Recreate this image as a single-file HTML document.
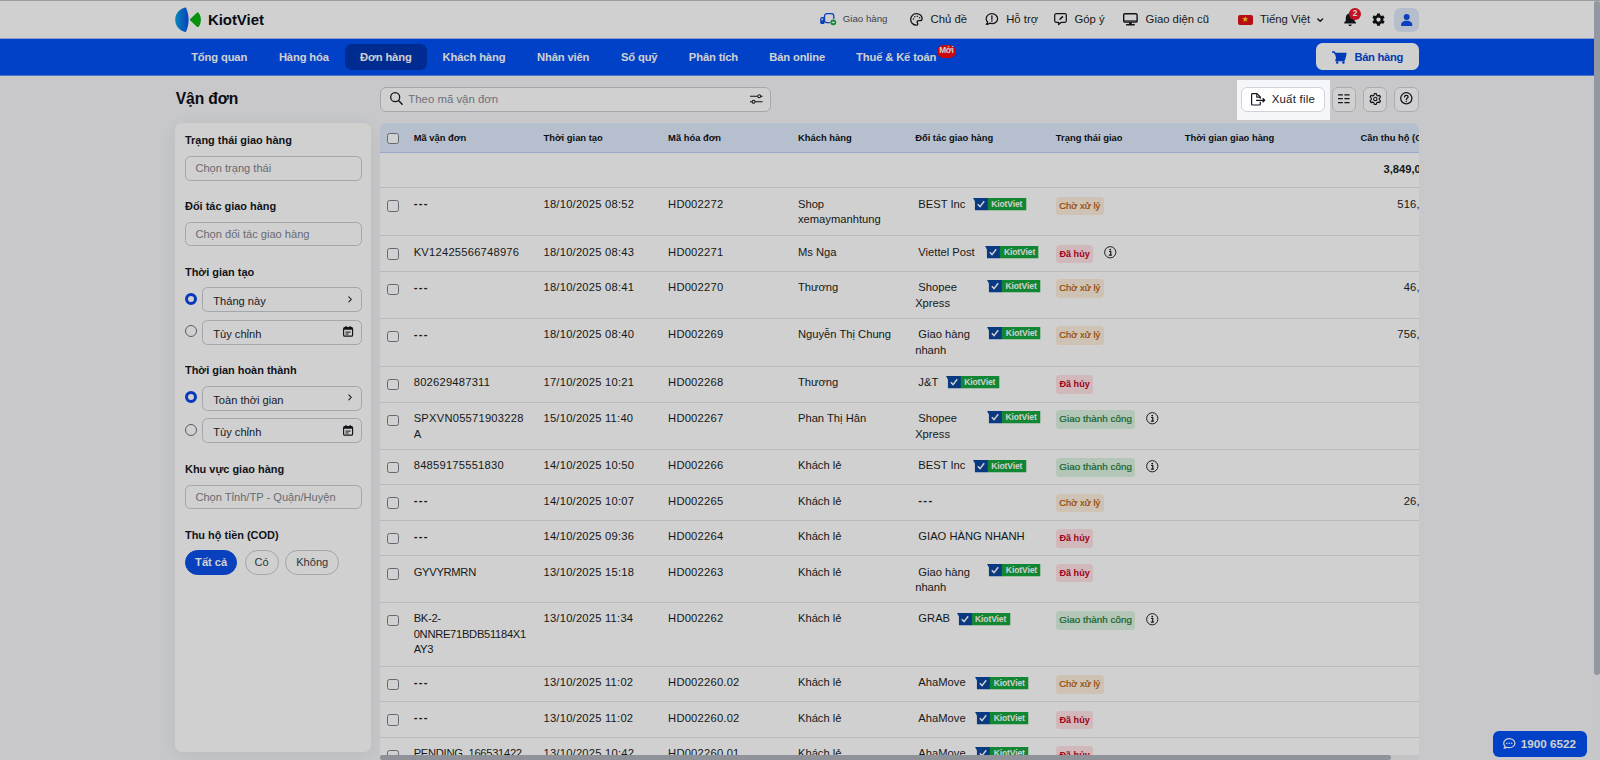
<!DOCTYPE html>
<html lang="vi">
<head>
<meta charset="utf-8">
<title>Vận đơn - KiotViet</title>
<style>
*{box-sizing:border-box;margin:0;padding:0}
html,body{width:1600px;height:760px;overflow:hidden}
body{position:relative;background:#f5f6f9;font-family:"Liberation Sans",sans-serif;font-size:11.5px;color:#15181e;line-height:15.5px}
svg{display:block;overflow:visible}
.abs{position:absolute}
/* ---------- header ---------- */
.topbar{position:absolute;left:0;top:0;width:1600px;height:38.4px;background:#fff}
.logo{position:absolute;left:174.5px;top:7.2px;height:25.6px;display:flex;align-items:center}
.logo b{font-size:15px;margin-left:7.4px;color:#0b0f1c;position:relative;top:-.2px;letter-spacing:-.05px}
.tool{position:absolute;top:11.6px;white-space:nowrap;font-size:11.3px;color:#1b1e24}
.tool.sm{font-size:9.7px;top:11.4px;color:#4a5160}
.ico{position:absolute}
.flag{position:absolute;left:1237.7px;top:14.5px;width:15.4px;height:10.2px;border-radius:2px;background:#df1217;overflow:hidden}
.bellbadge{position:absolute;left:1349.2px;top:7.8px;width:11.8px;height:11.8px;border-radius:50%;background:#f0142a;color:#fff;font-size:8.4px;font-weight:700;text-align:center;line-height:11.8px}
.avatar{position:absolute;left:1394px;top:7.5px;width:24.7px;height:24.6px;border-radius:6.5px;background:#dfe9fb}
/* ---------- nav ---------- */
.nav{position:absolute;left:0;top:38px;width:1600px;height:38px;background:#0050f4;border-top:1px solid #b4bcf8;border-bottom:1px solid #5f8df7}
.nav ul{list-style:none;position:absolute;left:175.3px;top:4.6px;display:flex}
.nav li{height:26.8px;line-height:26.4px;padding:0;text-align:center;color:#fff;font-weight:700;font-size:11.2px;letter-spacing:-.13px;white-space:nowrap;border-radius:6.5px;position:relative}
.nav li.on{background:#0036b4}
.badge-new{position:absolute;width:19px;height:13px;border-radius:7px;background:#f80a10;color:#fff;font-size:8.3px;font-weight:700;text-align:center;line-height:11.2px;letter-spacing:-.3px}
.sell{position:absolute;left:1316.4px;top:4.2px;width:102.8px;height:27.3px;background:#fff;border-radius:6.5px;color:#0048e0;font-weight:700;font-size:11.2px;letter-spacing:-.3px}
.sell span{position:absolute;left:38px;top:6.6px}
/* ---------- page head ---------- */
h1{position:absolute;left:175.8px;top:88.6px;font-size:15.6px;line-height:19px;font-weight:700;color:#0b0e14;letter-spacing:-.1px}
.search{position:absolute;left:380.3px;top:86.6px;width:390.4px;height:25px;border:1px solid #c9ccd3;border-radius:6px;background:#fff}
.search span{position:absolute;left:27px;top:4.8px;color:#868b95;font-size:11.4px}
.btn{position:absolute;top:86.6px;height:25px;border:1px solid #cfd3da;border-radius:6px;background:#fff}
.btn.sq{width:24.4px}
.btn.exp{left:1241.3px;width:83.4px}
.btn.exp span{position:absolute;left:29.4px;top:4.6px;font-size:11.4px;color:#15181e;letter-spacing:.25px}
/* ---------- sidebar ---------- */
.side{position:absolute;left:175px;top:123px;width:196.3px;height:629.4px;background:#fff;border-radius:7px;box-shadow:0 4px 24px rgba(0,0,0,.08)}
.side h3{position:absolute;left:10px;font-size:10.95px;line-height:14px;font-weight:700;color:#15181e;white-space:nowrap}
.inp{position:absolute;left:10px;width:176.8px;height:24.4px;border:1px solid #c9ccd3;border-radius:5.5px;background:#fff;font-size:11.1px;line-height:22.4px;padding-left:9.4px;color:#7f848e;white-space:nowrap}
.inp.opt{left:26.9px;width:159.9px;height:25px;color:#23262c;padding-left:10.4px;line-height:27px}
.radio{position:absolute;left:10px;width:12px;height:12px;border-radius:50%;border:1px solid #6d727c;background:#fff}
.radio.on{border:3.4px solid #0b45e6}
.pill{position:absolute;top:427px;height:25px;border:1px solid #c9ccd3;border-radius:13px;font-size:11.1px;line-height:23px;text-align:center;color:#3a3f49;background:#fff}
.pill.on{background:#0b4fe8;border-color:#0b4fe8;color:#fff;font-weight:700}
/* ---------- table ---------- */
.tw{position:absolute;left:380.3px;top:123px;width:1038.8px;height:637px;overflow:hidden;border-radius:6px 6px 0 0;background:#fff}
table{border-collapse:collapse;table-layout:fixed;width:1083.4px}
th{background:#deebfd;height:29.6px;padding-top:1.5px!important;font-size:9.4px;font-weight:700;text-align:left;color:#0f1218;border-bottom:1px solid #b9cff8;padding:0;white-space:nowrap;vertical-align:middle;line-height:12px}
td{vertical-align:top;padding:8.5px 0 0 0;border-bottom:1px solid #e2e4e8;font-size:11.2px;line-height:15.5px;color:#1b1e24;overflow:hidden}
td.n{letter-spacing:.22px}
td.u{letter-spacing:-.3px}
td.w{padding-right:6px;word-break:break-all}
tr.sum td{height:35px;font-weight:700}
tr.sum td.r{padding-right:30.4px}
th.r{padding-right:23.6px}
th.r,td.r{text-align:right;padding-right:24.5px}
.cb{display:block;width:11.6px;height:11.6px;border:1.1px solid #7b808a;border-radius:2.6px;background:#fff;margin:3.4px 0 0 7.2px}
th .cb{margin-top:0}
td.p{position:relative}
.kv{position:absolute;top:9.6px;height:12.2px;white-space:nowrap}
td.p2 .kv{top:7.9px}
td.s2{padding-top:7.1px}
td.s1{padding-top:8.1px}
.kv svg{position:absolute;left:0;top:0}
.kv i{position:absolute;left:18.5px;top:0;font-style:normal;font-weight:700;font-size:8.5px;line-height:12px;color:#fff;letter-spacing:-.1px}
.kv{width:53.3px}
.st{display:inline-block;height:18.4px;line-height:18.4px;border-radius:3.5px;padding:0 3.4px;font-size:9.4px;position:relative;top:.4px;white-space:nowrap}
.st.wait{background:#fdeedd;color:#b9590a;-webkit-text-stroke:.22px #b9590a}
.st.cancel{background:#ffe2e6;color:#c4001f;font-weight:700;font-size:9.1px;padding:0 3.6px}
.st.ok{background:#dcf3e2;color:#187a31;-webkit-text-stroke:.2px #187a31;font-size:9.8px;letter-spacing:.05px}
.info{display:inline-block;vertical-align:top;margin-left:10.6px;position:relative;top:1.9px}
.pt{padding-left:3.2px}
.d{font-weight:700;letter-spacing:1.3px;position:relative;top:-.4px}
.hscroll{position:absolute;left:380.3px;top:755.4px;width:1038.8px;height:4.6px;background:#eeeff2}
.hscroll i{position:absolute;left:0;top:0;width:1011px;height:4.6px;border-radius:2.3px;background:#b0b4bc}
/* ---------- overlay ---------- */
.spot{position:absolute;left:1236.6px;top:80px;width:93.4px;height:40px;box-shadow:0 0 0 3000px rgba(0,0,0,.184);pointer-events:none;z-index:50}
.vscroll{position:absolute;left:1593.8px;top:0;width:6.2px;height:760px;background:#c6c7ca;z-index:60}
.vscroll i{position:absolute;left:0;top:1px;width:6.2px;height:673.5px;border-radius:3px;background:#9297a1}
.topline{position:absolute;left:0;top:0;width:1600px;height:1px;background:#9d9d9d;z-index:61}
.call{position:absolute;left:1493.4px;top:730.8px;width:93.8px;height:25.8px;border-radius:6px;background:#0050f4;color:#fff;font-weight:700;font-size:11.7px;z-index:40}
.call span{position:absolute;left:27.4px;top:5.2px;white-space:nowrap}
</style>
</head>
<body>
<header class="topbar">
<div class="logo"><svg width="26" height="25.6" viewBox="0 0 26 25.6"><defs><linearGradient id="lg" x1="0" y1="0" x2="1" y2="0"><stop offset="0" stop-color="#0aa6e6"/><stop offset="1" stop-color="#0b50e4"/></linearGradient></defs><path d="M10.200 .5C4 1.900 .2 7 .2 12.700S4 23.500 10.200 24.900C10.600 25 10.900 24.900 11.100 24.500 12.700 20.900 13.600 16.900 13.600 12.700S12.700 4.500 11.100 .9C10.900 .5 10.600 .4 10.200 .5z" fill="url(#lg)"/><path d="M15.200 12L21.600 5.900C22.300 5.200 23.200 5.200 23.700 5.900 25.200 7.600 25.900 10 25.900 12.700S25.200 17.800 23.700 19.500C23.200 20.200 22.300 20.200 21.600 19.500L15.200 13.400C14.800 13 14.800 12.400 15.200 12z" fill="#0cb412"/></svg><b>KiotViet</b></div>
<svg class="ico" style="left:819.8px;top:12.6px" width="16.4" height="12.2" viewBox="0 0 16.4 12.2" ><rect x="4.500" y=".7" width="9.300" height="8.900" rx="2.300" fill="none" stroke="#0b4fe8" stroke-width="1.300"/><path d="M.2 6.200C.2 4.900 1 4.100 2.200 4.100H4.300V11H1.400C.7 11 .2 10.500 .2 9.800z" fill="#0b4fe8"/><path d="M1.400 6.300C1.400 5.700 1.800 5.300 2.400 5.300H3.100V7.300H1.400z" fill="#cfe0ff"/><circle cx="13.300" cy="9.300" r="3.500" fill="#fff"/><circle cx="13.300" cy="9.300" r="2.900" fill="#11a63a"/><rect x="11.700" y="8.400" width="3.200" height="1.800" rx=".8" fill="#d8f5df"/></svg>
<span class="tool sm" style="left:842.8px">Giao hàng</span>
<svg class="ico" style="left:909.7px;top:13px" width="12.8" height="12.8" viewBox="0 0 12.8 12.8" ><path d="M6.400 .7C3.200 .7 .7 3.200 .7 6.400s2.500 5.700 5.700 5.700c.9 0 1.400-.5 1.400-1.200 0-.4-.2-.7-.4-1-.2-.3-.3-.5-.3-.9 0-.8.600-1.300 1.300-1.300h1.500c1.300 0 2.200-.9 2.200-2.200C12.100 2.700 9.600 .7 6.400 .7z" fill="none" stroke="#15181e" stroke-width="1.300"/><circle cx="3.500" cy="6" r=".75" fill="#15181e"/><circle cx="4.800" cy="3.700" r=".75" fill="#15181e"/><circle cx="7.400" cy="3.200" r=".75" fill="#15181e"/><circle cx="9.600" cy="4.800" r=".75" fill="#15181e"/></svg>
<span class="tool" style="left:930.6px">Chủ đề</span>
<svg class="ico" style="left:985.4px;top:13.2px" width="13.8" height="12" viewBox="0 0 13.8 12" ><path d="M6.900 .7C3.700 .7 1.200 2.900 1.200 5.700c0 1.300 .5 2.400 1.400 3.300-.1 .9-.6 1.700-1.300 2.300 1.300 0 2.500-.4 3.400-1.100 .7 .2 1.400 .4 2.200 .4 3.200 0 5.700-2.200 5.700-4.900S10.100 .7 6.900 .7z" fill="none" stroke="#15181e" stroke-width="1.250" stroke-linejoin="round"/><path d="M6.900 3V6.300" stroke="#15181e" stroke-width="1.300" stroke-linecap="round"/><circle cx="6.900" cy="8.100" r=".8" fill="#15181e"/></svg>
<span class="tool" style="left:1006.2px">Hỗ trợ</span>
<svg class="ico" style="left:1054px;top:13.2px" width="13" height="12.2" viewBox="0 0 13 12.2" ><path d="M2.200 .7H10.800C11.700 .7 12.300 1.300 12.300 2.200V7.800C12.300 8.700 11.700 9.300 10.800 9.300H7.300L4.600 11.600V9.300H2.200C1.300 9.300 .7 8.700 .7 7.800V2.200C.7 1.300 1.300 .7 2.200 .7z" fill="none" stroke="#15181e" stroke-width="1.250" stroke-linejoin="round"/><path d="M5.200 7L5.600 5.400 8.300 2.700 9.500 3.900 6.800 6.600z" fill="#15181e"/></svg>
<span class="tool" style="left:1074.4px">Góp ý</span>
<svg class="ico" style="left:1123.4px;top:13.1px" width="14.8" height="12.6" viewBox="0 0 14.8 12.6" ><rect x=".7" y=".7" width="13.400" height="8.400" rx="1.200" fill="none" stroke="#15181e" stroke-width="1.400"/><path d="M.7 7.400H14.100V8.500H.7z" fill="#15181e"/><path d="M6 9.300H8.800V11.200H6z" fill="#15181e"/><path d="M3.600 11.800H11.200" stroke="#15181e" stroke-width="1.500" stroke-linecap="round"/></svg>
<span class="tool" style="left:1145.6px">Giao diện cũ</span>
<span class="flag"><svg class="abs" style="left:4.500px;top:1.900px" width="6.400" height="6.400" viewBox="0 0 10 10"><path d="M5 .3L6.200 3.700H9.800L6.900 5.800 8 9.300 5 7.200 2 9.300 3.100 5.800 .200 3.700H3.800z" fill="#ffe226"/></svg></span>
<span class="tool" style="left:1260px">Tiếng Việt</span>
<svg class="ico" style="left:1317.2px;top:17.6px" width="6.4" height="4.2" viewBox="0 0 6.4 4.2" ><path d="M.8 .9L3.200 3.300 5.600 .9" fill="none" stroke="#15181e" stroke-width="1.400" stroke-linecap="round" stroke-linejoin="round"/></svg>
<svg class="ico" style="left:1344px;top:12.3px" width="12.2" height="14.2" viewBox="0 0 12.2 14.2" ><path d="M6.100 0C5.500 0 5.100 .4 5.100 1V1.500C3.100 2 1.800 3.700 1.800 5.900V8.600L.300 10.500C0 10.900 .300 11.500 .800 11.500H11.400C11.900 11.500 12.200 10.900 11.900 10.500L10.400 8.600V5.900C10.400 3.700 9.100 2 7.100 1.500V1C7.100 .4 6.700 0 6.100 0z" fill="#15181e"/><path d="M4.500 12.500H7.700C7.700 13.400 7 14.100 6.100 14.100S4.500 13.400 4.500 12.500z" fill="#15181e"/></svg>
<span class="bellbadge">2</span>
<svg class="ico" style="left:1371.8px;top:12.9px" width="13" height="13" viewBox="0 0 13 13" ><path d="M11.300 6.600c0-.3 0-.5-.1-.8l1.200-.9c.1-.1.100-.2.100-.4L11.300 2.500c-.1-.1-.2-.2-.4-.1L9.500 2.900c-.4-.3-.8-.5-1.300-.7L8 .700C8 .600 7.800 .500 7.700 .500H5.300c-.1 0-.3.100-.3.200L4.800 2.200c-.5.200-.9.400-1.300.7L2.100 2.400c-.2-.1-.3 0-.4.100L.5 4.500c-.1.200 0 .3.100.4l1.200.9c-.1.300-.1.500-.1.800s0 .5.100.8L.6 8.300c-.1.100-.1.200-.1.400l1.200 2c.1.100.2.200.4.100l1.400-.5c.4.300.8.500 1.300.7l.2 1.500c0 .1.200.2.300.2h2.400c.1 0 .3-.1.300-.2l.2-1.500c.5-.2.900-.4 1.300-.7l1.400.5c.2.100.3 0 .4-.1l1.200-2c.1-.2 0-.3-.1-.4l-1.200-.9c.1-.3.1-.5.1-.8zM6.500 8.700c-1.200 0-2.100-.9-2.100-2.100s.9-2.100 2.100-2.100 2.100.9 2.100 2.100-.9 2.100-2.100 2.100z" fill="#111318"/></svg>
<span class="avatar"><svg class="abs" style="left:6.900px;top:6.100px" width="11.400" height="12.100" viewBox="0 0 11.400 12.100"><circle cx="5.700" cy="3" r="3" fill="#0b4fe8"/><path d="M0 11.300C0 8.500 2.300 6.800 5.700 6.800s5.700 1.700 5.700 4.500c0 .5-.3.800-.8.800H.8C.3 12.100 0 11.800 0 11.300z" fill="#0b4fe8"/></svg></span>
</header>
<nav class="nav"><ul>
<li style="width:87.7px">Tổng quan</li>
<li style="width:81.8px">Hàng hóa</li>
<li class="on" style="width:82px">Đơn hàng</li>
<li style="width:94.4px">Khách hàng</li>
<li style="width:84px">Nhân viên</li>
<li style="width:68.1px">Sổ quỹ</li>
<li style="width:80.4px">Phân tích</li>
<li style="width:87px">Bán online</li>
<li style="width:111px">Thuế &amp; Kế toán</li>
</ul><span class="badge-new" style="left:936.8px;top:5.8px">Mới</span>
<div class="sell"><svg class="ico" style="left:16px;top:7.4px" width="14.4" height="12.8" viewBox="0 0 14.4 12.8" ><path d="M0 .9H2.300L2.900 2.600H13.900L12.500 8.200H4.300L4 9.500H12.700" fill="none" stroke="#0048e0" stroke-width="1.500" stroke-linejoin="round"/><path d="M2.900 2.600H13.900L12.500 8.200H4.300z" fill="#0048e0"/><circle cx="5.200" cy="11.500" r="1.300" fill="#0048e0"/><circle cx="11.400" cy="11.500" r="1.300" fill="#0048e0"/></svg><span>Bán hàng</span></div>
</nav>
<main>
<h1>Vận đơn</h1>
<div class="search"><svg class="ico" style="left:9.2px;top:4.5px" width="12.8" height="12.8" viewBox="0 0 12.8 12.8" ><circle cx="5.200" cy="5.200" r="4.500" fill="none" stroke="#15181e" stroke-width="1.300"/><path d="M8.500 8.500L12.200 12.200" stroke="#15181e" stroke-width="1.400" stroke-linecap="round"/></svg><span>Theo mã vận đơn</span><svg class="ico" style="left:369px;top:6.3px" width="12.6" height="10.2" viewBox="0 0 12.6 10.2" ><path d="M0 2.300H12.600M0 7.800H12.600" stroke="#15181e" stroke-width="1.050"/><circle cx="9.200" cy="2.300" r="1.450" fill="#fff" stroke="#15181e" stroke-width="1.050"/><circle cx="3.600" cy="7.800" r="1.450" fill="#fff" stroke="#15181e" stroke-width="1.050"/></svg></div>
<div class="btn exp"><svg class="ico" style="left:9.2px;top:5.3px" width="14" height="12.6" viewBox="0 0 14 12.6" ><path d="M9.300 8.800V11.200C9.300 11.700 8.900 12 8.500 12H1.500C1 12 .6 11.700 .6 11.200V1.400C.6 .9 1 .6 1.500 .6H6L9.300 3.900V5.800" fill="none" stroke="#15181e" stroke-width="1.200" stroke-linejoin="round"/><path d="M5.800 .8V4.100H9.100" fill="none" stroke="#15181e" stroke-width="1.100"/><path d="M5 7.300H13.600M11.600 5.300L13.700 7.300 11.600 9.300" fill="none" stroke="#15181e" stroke-width="1.200" stroke-linejoin="round"/></svg><span>Xuất file</span></div>
<div class="btn sq" style="left:1332px"><svg class="ico" style="left:5.4px;top:6.6px" width="11.6" height="9.4" viewBox="0 0 11.6 9.4" ><path d="M0 .8H4.800M6.400 .8H11.600M0 4.700H4.800M6.400 4.700H11.600M0 8.600H4.800M6.400 8.600H11.600" stroke="#15181e" stroke-width="1.250"/></svg></div>
<div class="btn sq" style="left:1362.7px"><svg class="ico" style="left:4.9px;top:5.2px" width="12.6" height="12" viewBox="0 0 12.6 12" ><path d="M5.300 .6H7.300L7.700 2.200 8.900 2.900 10.500 2.400 11.500 4.100 10.300 5.300V6.700L11.500 7.900 10.500 9.600 8.900 9.100 7.700 9.800 7.300 11.400H5.300L4.900 9.800 3.700 9.100 2.100 9.600 1.100 7.900 2.300 6.700V5.300L1.100 4.100 2.100 2.400 3.700 2.900 4.900 2.200z" fill="none" stroke="#15181e" stroke-width="1.150" stroke-linejoin="round"/><circle cx="6.300" cy="6" r="1.700" fill="none" stroke="#15181e" stroke-width="1.100"/></svg></div>
<div class="btn sq" style="left:1394.2px"><svg class="ico" style="left:4.9px;top:4.9px" width="12.6" height="12.6" viewBox="0 0 12.6 12.6" ><circle cx="6.300" cy="6.300" r="5.600" fill="none" stroke="#15181e" stroke-width="1.250"/><path d="M4.500 5C4.500 3.900 5.300 3.300 6.300 3.300S8.100 3.900 8.100 4.900C8.100 6.100 6.300 6.200 6.300 7.500" fill="none" stroke="#15181e" stroke-width="1.250" stroke-linecap="round"/><circle cx="6.300" cy="9.200" r=".8" fill="#15181e"/></svg></div>
<aside class="side">
<h3 style="top:10.4px">Trạng thái giao hàng</h3>
<div class="inp" style="top:33.3px">Chọn trạng thái</div>
<h3 style="top:76.2px">Đối tác giao hàng</h3>
<div class="inp" style="top:99.1px">Chọn đối tác giao hàng</div>
<h3 style="top:142px">Thời gian tạo</h3>
<span class="radio on" style="top:170.100px"></span>
<div class="inp opt" style="top:164.300px">Tháng này<svg class="ico" style="left:145.2px;top:7.8px" width="4.1" height="6.6" viewBox="0 0 4.1 6.6" ><path d="M.8 .8L3.300 3.300 .8 5.800" fill="none" stroke="#23262c" stroke-width="1.100" stroke-linecap="round" stroke-linejoin="round"/></svg></div>
<span class="radio" style="top:202.200px"></span>
<div class="inp opt" style="top:196.900px">Tùy chỉnh<svg class="ico" style="left:139.8px;top:5.4px" width="10.2" height="10.8" viewBox="0 0 10.2 10.8" ><rect x=".6" y="1.600" width="9" height="8.600" rx="1.300" fill="none" stroke="#15181e" stroke-width="1.150"/><path d="M.6 2.900C.6 2.100 1.100 1.600 1.900 1.600H8.300C9.100 1.600 9.600 2.100 9.600 2.900V3.700H.6z" fill="#15181e"/><path d="M3 0V2M7.200 0V2" stroke="#15181e" stroke-width="1.200"/><path d="M2.500 6.100H7.700M2.500 8H5.600" stroke="#15181e" stroke-width="1"/></svg></div>
<h3 style="top:240.400px">Thời gian hoàn thành</h3>
<span class="radio on" style="top:268px"></span>
<div class="inp opt" style="top:262.600px">Toàn thời gian<svg class="ico" style="left:145.2px;top:7.8px" width="4.1" height="6.6" viewBox="0 0 4.1 6.6" ><path d="M.8 .8L3.300 3.300 .8 5.800" fill="none" stroke="#23262c" stroke-width="1.100" stroke-linecap="round" stroke-linejoin="round"/></svg></div>
<span class="radio" style="top:300.500px"></span>
<div class="inp opt" style="top:295.200px">Tùy chỉnh<svg class="ico" style="left:139.8px;top:5.4px" width="10.2" height="10.8" viewBox="0 0 10.2 10.8" ><rect x=".6" y="1.600" width="9" height="8.600" rx="1.300" fill="none" stroke="#15181e" stroke-width="1.150"/><path d="M.6 2.900C.6 2.100 1.100 1.600 1.900 1.600H8.300C9.100 1.600 9.600 2.100 9.600 2.900V3.700H.6z" fill="#15181e"/><path d="M3 0V2M7.200 0V2" stroke="#15181e" stroke-width="1.200"/><path d="M2.500 6.100H7.700M2.500 8H5.600" stroke="#15181e" stroke-width="1"/></svg></div>
<h3 style="top:338.800px">Khu vực giao hàng</h3>
<div class="inp" style="top:361.800px">Chọn Tỉnh/TP - Quận/Huyện</div>
<h3 style="top:404.500px">Thu hộ tiền (COD)</h3>
<span class="pill on" style="left:9.900px;width:52.500px">Tất cả</span>
<span class="pill" style="left:69.500px;width:34.300px">Có</span>
<span class="pill" style="left:110.400px;width:53.600px">Không</span>
</aside>
<div class="tw"><table><colgroup><col style="width:33.4px"><col style="width:129.8px"><col style="width:124.6px"><col style="width:129.9px"><col style="width:117.2px"><col style="width:140.7px"><col style="width:129px"><col style="width:160px"><col style="width:118.8px"></colgroup>
<thead><tr><th><span class="cb"></span></th><th>Mã vận đơn</th><th>Thời gian tạo</th><th>Mã hóa đơn</th><th>Khách hàng</th><th>Đối tác giao hàng</th><th>Trạng thái giao</th><th>Thời gian giao hàng</th><th class="r">Cần thu hộ (COD)</th></tr></thead><tbody>
<tr class="sum"><td></td><td></td><td></td><td></td><td></td><td></td><td></td><td></td><td class="r">3,849,000</td></tr>
<tr class="h2" style="height:48.0px"><td><span class="cb"></span></td><td class="w"><b class="d">---</b></td><td class="n">18/10/2025 08:52</td><td class="n">HD002272</td><td style="padding-right:20px">Shop xemaymanhtung</td><td class="p"><span class="pt">BEST Inc</span><span class="kv" style="left:57.5px"><svg width="53.300" height="12.200" viewBox="0 0 53.300 12.200"><path d="M0 0H15V12.200H1.900V3.600z" fill="#0c469f"/><path d="M14.800 0H53.300V12.200H14.800z" fill="#16a53f"/><path d="M4.800 6.300L7 8.600 11.200 3.300" fill="none" stroke="#fff" stroke-width="1.500"/></svg><i>KiotViet</i></span></td><td class="s1"><span class="st wait">Chờ xử lý</span></td><td></td><td class="r n">516,000</td></tr>
<tr class="h1" style="height:35.7px"><td><span class="cb"></span></td><td class="w n">KV12425566748976</td><td class="n">18/10/2025 08:43</td><td class="n">HD002271</td><td style="padding-right:20px">Ms Nga</td><td class="p"><span class="pt">Viettel Post</span><span class="kv" style="left:70.3px"><svg width="53.300" height="12.200" viewBox="0 0 53.300 12.200"><path d="M0 0H15V12.200H1.900V3.600z" fill="#0c469f"/><path d="M14.800 0H53.300V12.200H14.800z" fill="#16a53f"/><path d="M4.800 6.300L7 8.600 11.200 3.300" fill="none" stroke="#fff" stroke-width="1.500"/></svg><i>KiotViet</i></span></td><td class="s1"><span class="st cancel">Đã hủy</span><span class="info"><svg width="12.5" height="12.5" viewBox="0 0 12 12"><circle cx="6" cy="6" r="5.400" fill="none" stroke="#15181e" stroke-width=".9"/><circle cx="6" cy="3.400" r=".85" fill="#15181e"/><path d="M4.900 5.300H6.500V8.500M4.700 8.700H7.500" fill="none" stroke="#15181e" stroke-width="1.100"/></svg></span></td><td></td><td class="r n"></td></tr>
<tr class="h2" style="height:46.9px"><td><span class="cb"></span></td><td class="w"><b class="d">---</b></td><td class="n">18/10/2025 08:41</td><td class="n">HD002270</td><td style="padding-right:20px">Thương</td><td class="p p2"><span class="pt">Shopee</span><br>Xpress<span class="kv" style="left:71.8px"><svg width="53.300" height="12.200" viewBox="0 0 53.300 12.200"><path d="M0 0H15V12.200H1.900V3.600z" fill="#0c469f"/><path d="M14.800 0H53.300V12.200H14.800z" fill="#16a53f"/><path d="M4.800 6.300L7 8.600 11.200 3.300" fill="none" stroke="#fff" stroke-width="1.500"/></svg><i>KiotViet</i></span></td><td class="s2"><span class="st wait">Chờ xử lý</span></td><td></td><td class="r n">46,000</td></tr>
<tr class="h2" style="height:48.2px"><td><span class="cb"></span></td><td class="w"><b class="d">---</b></td><td class="n">18/10/2025 08:40</td><td class="n">HD002269</td><td style="padding-right:20px">Nguyễn Thị Chung</td><td class="p p2"><span class="pt">Giao hàng</span><br>nhanh<span class="kv" style="left:72.2px"><svg width="53.300" height="12.200" viewBox="0 0 53.300 12.200"><path d="M0 0H15V12.200H1.900V3.600z" fill="#0c469f"/><path d="M14.800 0H53.300V12.200H14.800z" fill="#16a53f"/><path d="M4.800 6.300L7 8.600 11.200 3.300" fill="none" stroke="#fff" stroke-width="1.500"/></svg><i>KiotViet</i></span></td><td class="s2"><span class="st wait">Chờ xử lý</span></td><td></td><td class="r n">756,000</td></tr>
<tr class="h1" style="height:35.8px"><td><span class="cb"></span></td><td class="w n">802629487311</td><td class="n">17/10/2025 10:21</td><td class="n">HD002268</td><td style="padding-right:20px">Thương</td><td class="p"><span class="pt">J&amp;T</span><span class="kv" style="left:30.5px"><svg width="53.300" height="12.200" viewBox="0 0 53.300 12.200"><path d="M0 0H15V12.200H1.900V3.600z" fill="#0c469f"/><path d="M14.800 0H53.300V12.200H14.800z" fill="#16a53f"/><path d="M4.800 6.300L7 8.600 11.200 3.300" fill="none" stroke="#fff" stroke-width="1.500"/></svg><i>KiotViet</i></span></td><td class="s1"><span class="st cancel">Đã hủy</span></td><td></td><td class="r n"></td></tr>
<tr class="h2" style="height:47.3px"><td><span class="cb"></span></td><td class="w n">SPXVN05571903228<br>A</td><td class="n">15/10/2025 11:40</td><td class="n">HD002267</td><td style="padding-right:20px">Phan Thị Hân</td><td class="p p2"><span class="pt">Shopee</span><br>Xpress<span class="kv" style="left:71.8px"><svg width="53.300" height="12.200" viewBox="0 0 53.300 12.200"><path d="M0 0H15V12.200H1.900V3.600z" fill="#0c469f"/><path d="M14.800 0H53.300V12.200H14.800z" fill="#16a53f"/><path d="M4.800 6.300L7 8.600 11.200 3.300" fill="none" stroke="#fff" stroke-width="1.500"/></svg><i>KiotViet</i></span></td><td class="s2"><span class="st ok">Giao thành công</span><span class="info"><svg width="12.5" height="12.5" viewBox="0 0 12 12"><circle cx="6" cy="6" r="5.400" fill="none" stroke="#15181e" stroke-width=".9"/><circle cx="6" cy="3.400" r=".85" fill="#15181e"/><path d="M4.900 5.300H6.500V8.500M4.700 8.700H7.500" fill="none" stroke="#15181e" stroke-width="1.100"/></svg></span></td><td></td><td class="r n"></td></tr>
<tr class="h1" style="height:35.1px"><td><span class="cb"></span></td><td class="w n">84859175551830</td><td class="n">14/10/2025 10:50</td><td class="n">HD002266</td><td style="padding-right:20px">Khách lẻ</td><td class="p"><span class="pt">BEST Inc</span><span class="kv" style="left:57.5px"><svg width="53.300" height="12.200" viewBox="0 0 53.300 12.200"><path d="M0 0H15V12.200H1.900V3.600z" fill="#0c469f"/><path d="M14.800 0H53.300V12.200H14.800z" fill="#16a53f"/><path d="M4.800 6.300L7 8.600 11.200 3.300" fill="none" stroke="#fff" stroke-width="1.500"/></svg><i>KiotViet</i></span></td><td class="s1"><span class="st ok">Giao thành công</span><span class="info"><svg width="12.5" height="12.5" viewBox="0 0 12 12"><circle cx="6" cy="6" r="5.400" fill="none" stroke="#15181e" stroke-width=".9"/><circle cx="6" cy="3.400" r=".85" fill="#15181e"/><path d="M4.900 5.300H6.500V8.500M4.700 8.700H7.500" fill="none" stroke="#15181e" stroke-width="1.100"/></svg></span></td><td></td><td class="r n"></td></tr>
<tr class="h1" style="height:35.8px"><td><span class="cb"></span></td><td class="w"><b class="d">---</b></td><td class="n">14/10/2025 10:07</td><td class="n">HD002265</td><td style="padding-right:20px">Khách lẻ</td><td class="p"><span class="pt"><b class="d">---</b></span></td><td class="s1"><span class="st wait">Chờ xử lý</span></td><td></td><td class="r n">26,000</td></tr>
<tr class="h1" style="height:35.4px"><td><span class="cb"></span></td><td class="w"><b class="d">---</b></td><td class="n">14/10/2025 09:36</td><td class="n">HD002264</td><td style="padding-right:20px">Khách lẻ</td><td class="p"><span class="pt">GIAO HÀNG NHANH</span></td><td class="s1"><span class="st cancel">Đã hủy</span></td><td></td><td class="r n"></td></tr>
<tr class="h2" style="height:46.7px"><td><span class="cb"></span></td><td class="w u">GYVYRMRN</td><td class="n">13/10/2025 15:18</td><td class="n">HD002263</td><td style="padding-right:20px">Khách lẻ</td><td class="p p2"><span class="pt">Giao hàng</span><br>nhanh<span class="kv" style="left:72.2px"><svg width="53.300" height="12.200" viewBox="0 0 53.300 12.200"><path d="M0 0H15V12.200H1.900V3.600z" fill="#0c469f"/><path d="M14.800 0H53.300V12.200H14.800z" fill="#16a53f"/><path d="M4.800 6.300L7 8.600 11.200 3.300" fill="none" stroke="#fff" stroke-width="1.500"/></svg><i>KiotViet</i></span></td><td class="s2"><span class="st cancel">Đã hủy</span></td><td></td><td class="r n"></td></tr>
<tr class="h3" style="height:64.0px"><td><span class="cb"></span></td><td class="w u">BK-2-<br>0NNRE71BDB51184X1<br>AY3</td><td class="n">13/10/2025 11:34</td><td class="n">HD002262</td><td style="padding-right:20px">Khách lẻ</td><td class="p"><span class="pt">GRAB</span><span class="kv" style="left:41.4px"><svg width="53.300" height="12.200" viewBox="0 0 53.300 12.200"><path d="M0 0H15V12.200H1.900V3.600z" fill="#0c469f"/><path d="M14.800 0H53.300V12.200H14.800z" fill="#16a53f"/><path d="M4.800 6.300L7 8.600 11.200 3.300" fill="none" stroke="#fff" stroke-width="1.500"/></svg><i>KiotViet</i></span></td><td class="s1"><span class="st ok">Giao thành công</span><span class="info"><svg width="12.5" height="12.5" viewBox="0 0 12 12"><circle cx="6" cy="6" r="5.400" fill="none" stroke="#15181e" stroke-width=".9"/><circle cx="6" cy="3.400" r=".85" fill="#15181e"/><path d="M4.900 5.300H6.500V8.500M4.700 8.700H7.500" fill="none" stroke="#15181e" stroke-width="1.100"/></svg></span></td><td></td><td class="r n"></td></tr>
<tr class="h1" style="height:35.4px"><td><span class="cb"></span></td><td class="w"><b class="d">---</b></td><td class="n">13/10/2025 11:02</td><td class="n">HD002260.02</td><td style="padding-right:20px">Khách lẻ</td><td class="p"><span class="pt">AhaMove</span><span class="kv" style="left:60px"><svg width="53.300" height="12.200" viewBox="0 0 53.300 12.200"><path d="M0 0H15V12.200H1.900V3.600z" fill="#0c469f"/><path d="M14.800 0H53.300V12.200H14.800z" fill="#16a53f"/><path d="M4.800 6.300L7 8.600 11.200 3.300" fill="none" stroke="#fff" stroke-width="1.500"/></svg><i>KiotViet</i></span></td><td class="s1"><span class="st wait">Chờ xử lý</span></td><td></td><td class="r n"></td></tr>
<tr class="h1" style="height:35.4px"><td><span class="cb"></span></td><td class="w"><b class="d">---</b></td><td class="n">13/10/2025 11:02</td><td class="n">HD002260.02</td><td style="padding-right:20px">Khách lẻ</td><td class="p"><span class="pt">AhaMove</span><span class="kv" style="left:60px"><svg width="53.300" height="12.200" viewBox="0 0 53.300 12.200"><path d="M0 0H15V12.200H1.900V3.600z" fill="#0c469f"/><path d="M14.800 0H53.300V12.200H14.800z" fill="#16a53f"/><path d="M4.800 6.300L7 8.600 11.200 3.300" fill="none" stroke="#fff" stroke-width="1.500"/></svg><i>KiotViet</i></span></td><td class="s1"><span class="st cancel">Đã hủy</span></td><td></td><td class="r n"></td></tr>
<tr class="h1" style="height:35.4px"><td><span class="cb"></span></td><td class="w u">PENDING_166531422</td><td class="n">13/10/2025 10:42</td><td class="n">HD002260.01</td><td style="padding-right:20px">Khách lẻ</td><td class="p"><span class="pt">AhaMove</span><span class="kv" style="left:60px"><svg width="53.300" height="12.200" viewBox="0 0 53.300 12.200"><path d="M0 0H15V12.200H1.900V3.600z" fill="#0c469f"/><path d="M14.800 0H53.300V12.200H14.800z" fill="#16a53f"/><path d="M4.800 6.300L7 8.600 11.200 3.300" fill="none" stroke="#fff" stroke-width="1.500"/></svg><i>KiotViet</i></span></td><td class="s1"><span class="st cancel">Đã hủy</span></td><td></td><td class="r n"></td></tr>
</tbody></table></div>
<div class="hscroll"><i></i></div>
</main>
<div class="spot"></div>
<div class="call"><svg class="ico" style="left:9.6px;top:7.3px" width="13" height="11" viewBox="0 0 13 11" ><path d="M6.300 .6C3.200 .6 .7 2.600 .7 5.200c0 1.200 .5 2.200 1.400 3-.1 .8-.5 1.500-1.100 2 1.200 0 2.200-.3 3-.9 .7 .3 1.500 .4 2.300 .4 3.100 0 5.600-2 5.600-4.500S9.400 .6 6.300 .6z" fill="none" stroke="#fff" stroke-width="1.250" stroke-linejoin="round"/><circle cx="3.900" cy="5.200" r=".8" fill="#fff"/><circle cx="6.300" cy="5.200" r=".8" fill="#fff"/><circle cx="8.700" cy="5.200" r=".8" fill="#fff"/></svg><span>1900 6522</span></div>
<div class="vscroll"><i></i></div><div class="topline"></div>
</body>
</html>
